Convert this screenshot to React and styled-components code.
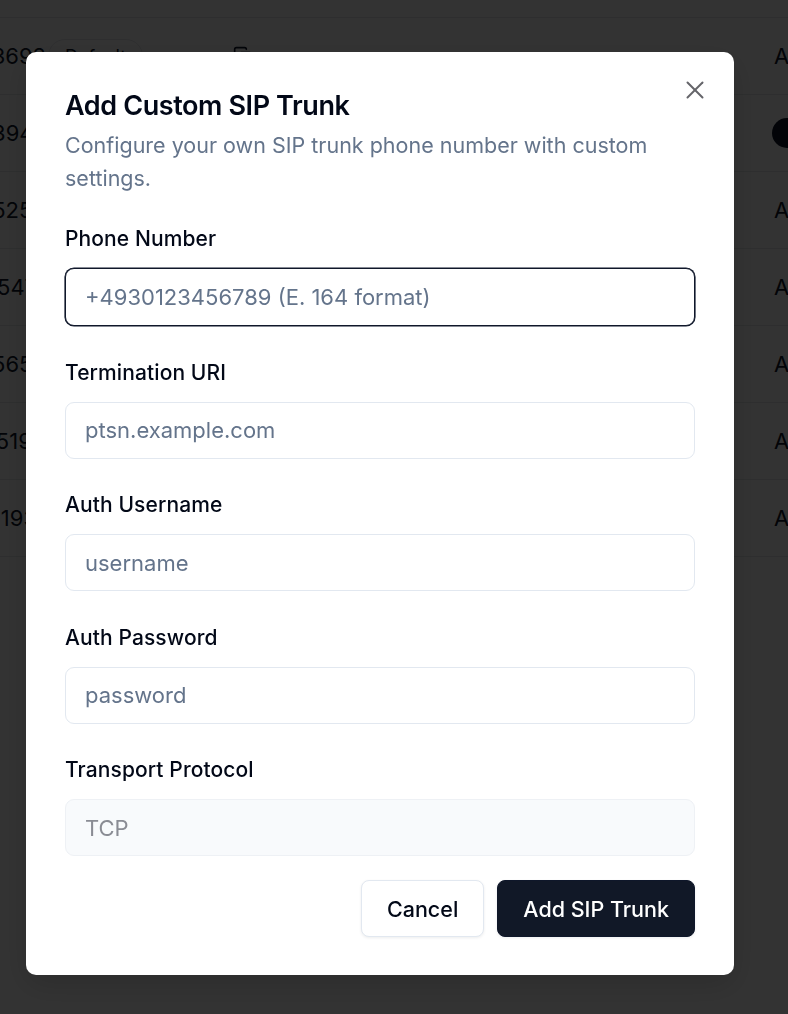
import React from "react";
import styled, { createGlobalStyle } from "styled-components";
import { X, Copy } from "lucide-react";

const GlobalStyle = createGlobalStyle`
  * { box-sizing: border-box; }
  html, body {
    margin: 0;
    padding: 0;
    background: #ffffff;
    overflow: hidden;
    font-family: Inter, "Noto Sans", "Liberation Sans", sans-serif;
    color: #0f172a;
  }
`;

const Page = styled.div`
  width: 100%;
  height: 1014px;
  overflow: hidden;
`;

const TableHead = styled.div`
  height: 18px;
  border-bottom: 1px solid #e5e7eb;
`;

const Row = styled.div`
  display: flex;
  align-items: center;
  height: 77px;
  border-bottom: 1px solid #e5e7eb;
  font-size: 22px;
  white-space: nowrap;
`;

const NumberCell = styled.div`
  width: 46px;
  display: flex;
  justify-content: flex-end;
  overflow: hidden;
  flex-shrink: 0;
`;

const Badge = styled.span`
  margin-left: 2px;
  height: 34px;
  padding: 0 16px;
  border: 1px solid #e5e7eb;
  border-radius: 17px;
  font-size: 18px;
  display: inline-flex;
  align-items: center;
`;

const IconCell = styled.div`
  margin-left: 90px;
  display: flex;
  align-items: center;
`;

const StatusCell = styled.div`
  margin-left: auto;
  width: 14px;
  overflow: hidden;
  flex-shrink: 0;
`;

const Dot = styled.div`
  margin-left: auto;
  width: 16px;
  height: 30px;
  border-radius: 15px 0 0 15px;
  background: #0f172a;
`;

const Overlay = styled.div`
  position: fixed;
  inset: 0;
  background: rgba(0, 0, 0, 0.8);
`;

const Dialog = styled.div`
  position: fixed;
  left: 26px;
  top: 52px;
  width: 708px;
  background: #ffffff;
  border-radius: 10px;
  padding: 37px 39px 38px 39px;
  display: flex;
  flex-direction: column;
  box-shadow: 0 10px 30px rgba(0, 0, 0, 0.15);
`;

const CloseButton = styled.button`
  position: absolute;
  right: 24px;
  top: 23px;
  width: 30px;
  height: 30px;
  padding: 0;
  border: none;
  background: transparent;
  color: #3f3f46;
  opacity: 0.8;
  display: flex;
  align-items: center;
  justify-content: center;
  cursor: pointer;
`;

const Title = styled.h2`
  margin: 0;
  font-size: 27px;
  line-height: 33px;
  font-weight: 600;
  letter-spacing: -0.4px;
  color: #020817;
`;

const Description = styled.p`
  margin: 7px 0 0 0;
  font-size: 21.5px;
  line-height: 33px;
  color: #64748b;
  max-width: 620px;
`;

const Form = styled.form`
  margin-top: 30px;
  display: flex;
  flex-direction: column;
  gap: 32.5px;
`;

const Field = styled.div`
  display: flex;
  flex-direction: column;
  gap: 15px;
`;

const Label = styled.label`
  font-size: 21px;
  line-height: 28px;
  font-weight: 500;
  letter-spacing: 0.1px;
  color: #020817;
`;

const Input = styled.input`
  height: ${(p) => (p.$focused ? 58 : 57)}px;
  width: 100%;
  padding: 0 19px;
  border-radius: 9px;
  border: 1px solid ${(p) => (p.$focused ? "#0f172a" : "#e2e8f0")};
  box-shadow: ${(p) => (p.$focused ? "0 0 0 0.6px #0f172a" : "none")};
  background: #ffffff;
  font-family: inherit;
  font-size: 22px;
  color: #0f172a;
  outline: none;
  &::placeholder {
    color: #64748b;
  }
`;

const SelectTrigger = styled.button`
  height: 57px;
  width: 100%;
  padding: 0 19px;
  border-radius: 9px;
  border: 1px solid #eef1f5;
  background: #f8fafc;
  font-family: inherit;
  font-size: 22px;
  color: #8a8c94;
  text-align: left;
  cursor: not-allowed;
`;

const Footer = styled.div`
  margin-top: 24px;
  display: flex;
  justify-content: flex-end;
  gap: 13px;
`;

const Button = styled.button`
  height: 57px;
  padding: 0 25px;
  border-radius: 8px;
  font-family: inherit;
  font-size: 21.5px;
  font-weight: 500;
  cursor: pointer;
  border: 1px solid ${(p) => (p.$primary ? "#0f172a" : "#e2e8f0")};
  background: ${(p) => (p.$primary ? "#111827" : "#ffffff")};
  color: ${(p) => (p.$primary ? "#ffffff" : "#020817")};
  box-shadow: 0 1px 3px rgba(15, 23, 42, 0.08);
`;

const rows = [
  { n: "3692", badge: true },
  { n: "3947", dot: true },
  { n: "5258" },
  { n: "5471" },
  { n: "5653" },
  { n: "5194" },
  { n: "1931" },
];

const fields = [
  { label: "Phone Number", placeholder: "+4930123456789 (E. 164 format)", focused: true },
  { label: "Termination URI", placeholder: "ptsn.example.com" },
  { label: "Auth Username", placeholder: "username" },
  { label: "Auth Password", placeholder: "password", type: "password" },
];

export default function App() {
  return (
    <>
      <GlobalStyle />
      <Page>
        <TableHead />
        {rows.map((r) => (
          <Row key={r.n}>
            <NumberCell>{r.n}</NumberCell>
            {r.badge && (
              <>
                <Badge>Default</Badge>
                <IconCell>
                  <Copy size={20} />
                </IconCell>
              </>
            )}
            {r.dot ? <Dot /> : <StatusCell>Active</StatusCell>}
          </Row>
        ))}
      </Page>
      <Overlay />
      <Dialog role="dialog">
        <CloseButton aria-label="Close">
          <X size={30} strokeWidth={1.6} />
        </CloseButton>
        <Title>Add Custom SIP Trunk</Title>
        <Description>
          Configure your own SIP trunk phone number with custom settings.
        </Description>
        <Form onSubmit={(e) => e.preventDefault()}>
          {fields.map((f) => (
            <Field key={f.label}>
              <Label>{f.label}</Label>
              <Input
                type={f.type || "text"}
                placeholder={f.placeholder}
                $focused={f.focused}
              />
            </Field>
          ))}
          <Field>
            <Label>Transport Protocol</Label>
            <SelectTrigger type="button" disabled>
              TCP
            </SelectTrigger>
          </Field>
        </Form>
        <Footer>
          <Button type="button">Cancel</Button>
          <Button type="submit" $primary>
            Add SIP Trunk
          </Button>
        </Footer>
      </Dialog>
    </>
  );
}
